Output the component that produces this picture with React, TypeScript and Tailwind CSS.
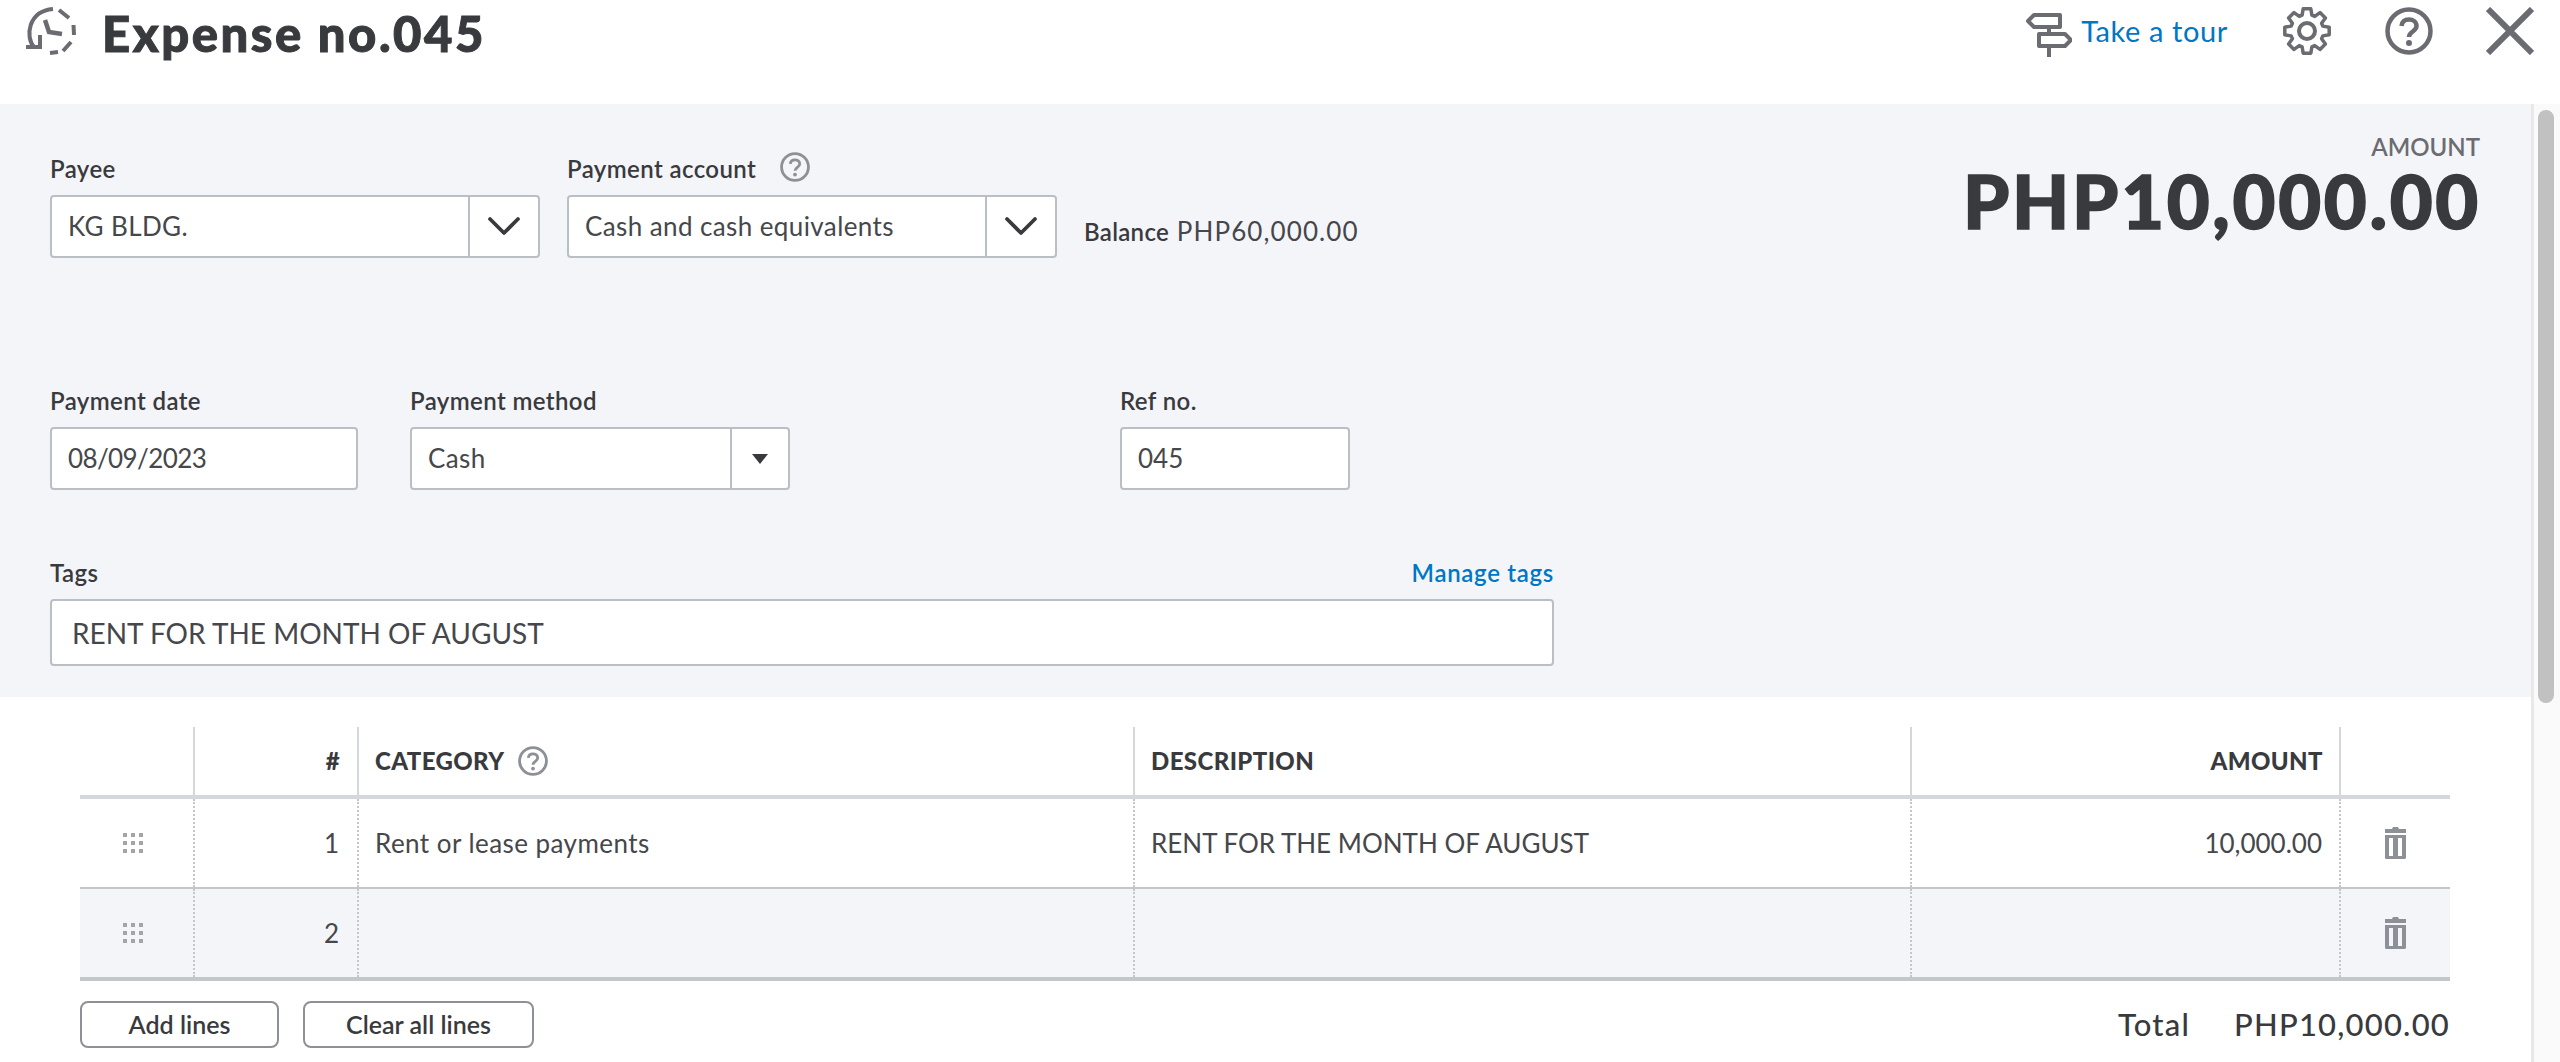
import { ChevronDown } from "lucide-react";

const font = { fontFamily: "Lato, 'Open Sans', sans-serif" };

// 8 blocky teeth, same outline as the toolbar gear
const gearPoints = Array.from({ length: 8 }, (_, i) => {
    const a = (i * Math.PI) / 4 - Math.PI / 2;
    const pt = (r: number, d: number) => `${(24 + r * Math.cos(a + d)).toFixed(1)},${(24 + r * Math.sin(a + d)).toFixed(1)}`;
    return [pt(16.5, -0.3), pt(22.5, -0.17), pt(22.5, 0.17), pt(16.5, 0.3)].join(" ");
}).join(" ");

function HelpIcon({ className }: { className: string }) {
    return (
        <svg viewBox="0 0 48 48" className={className} fill="none" stroke="currentColor">
            <circle cx="24" cy="24" r="21.5" strokeWidth="4.500" />
            <path d="M16.5 19c.5-4.5 3.5-6.5 7.5-6.5s7.500 2.500 7.500 6.500c0 5.500-7.500 5.500-7.500 11" strokeWidth="4.500" />
            <circle cx="24" cy="36" r="3" fill="currentColor" stroke="none" />
        </svg>
    );
}

function Grip() {
    const dots = [0, 1, 2];
    return (
        <svg width="20" height="20" viewBox="0 0 20 20" fill="#a3a5a9">
            {dots.map((r) => dots.map((c) => <rect key={`${r}${c}`} x={c * 8} y={r * 8} width="4" height="4" />))}
        </svg>
    );
}

function Trash() {
    return (
        <svg width="21" height="32" viewBox="0 0 21 32" fill="#8d9096">
            <path d="M8 0h5l1 2h7v4H0V2h7z" />
            <path fillRule="evenodd" d="M0 8h21v22.500a1.500 1.500 0 0 1-1.500 1.500h-18A1.500 1.500 0 0 1 0 30.500zM4 11v18h4V11zM13 11v18h4V11z" />
        </svg>
    );
}

function SelectBox({ value, small, className }: { value: string; small?: boolean; className: string }) {
    return (
        <div className={`flex h-[63px] rounded-[4px] border-2 border-[#babec5] bg-white ${className}`}>
            <div className="flex flex-1 items-center pl-[16px] text-[26px] tracking-[0.4px] text-[#46474b]">{value}</div>
            <div className={`flex items-center justify-center border-l-2 border-[#babec5] ${small ? "w-[58px]" : "w-[70px]"}`}>
                {small ? (
                    <div className="h-0 w-0 border-x-[8px] border-t-[10px] border-x-transparent border-t-[#393a3d]" />
                ) : (
                    <ChevronDown className="mb-[2px] h-[56px] w-[56px] text-[#393a3d]" strokeWidth={1.6} />
                )}
            </div>
        </div>
    );
}

function Label({ children }: { children: React.ReactNode }) {
    return <div className="text-[24px] leading-[30px] font-semibold tracking-[0.4px] text-[#393a3d]">{children}</div>;
}

function TextBox({ value, className }: { value: string; className: string }) {
    return (
        <div className={`flex h-[63px] items-center rounded-[4px] border-2 border-[#babec5] bg-white pl-[16px] text-[26px] text-[#46474b] ${className}`}>
            {value}
        </div>
    );
}

function Row({ n, category, description, amount, shaded }: { n: string; category?: string; description?: string; amount?: string; shaded?: boolean }) {
    const cell = "flex h-full items-center border-l-2 border-dotted border-[#c4c6ca]";
    return (
        <div className={`grid h-[88px] grid-cols-[113px_164px_776px_777px_429px_111px] items-center text-[26px] text-[#46474b] ${shaded ? "bg-[#f4f5f8]" : "bg-white"}`}>
            <div className="flex items-center justify-center pr-[8px]"><Grip /></div>
            <div className={`${cell} justify-end pr-[18px]`}>{n}</div>
            <div className={`${cell} pl-[16px] tracking-[0.45px]`}>{category}</div>
            <div className={`${cell} pl-[16px]`}>{description}</div>
            <div className={`${cell} justify-end pr-[17px]`}>{amount}</div>
            <div className={`${cell} justify-center`}><Trash /></div>
        </div>
    );
}

export default function App() {
    return (
        <div style={font} className="flex h-[1062px] w-[2560px] flex-col overflow-hidden bg-white text-[#393a3d]">
            <header className="flex h-[104px] shrink-0">
                <div className="flex flex-1 items-start">
                    <svg viewBox="0 0 50 48" className="mt-[7px] ml-[26px] h-[48px] w-[50px]" fill="none" stroke="#6b6c72" strokeWidth="4">
                        <path d="M8 40C-1 30 2 4 27 2" />
                        <path d="M33 3l10 8M47.500 18l.5 10M45 35l-8 9M32 45l-8 1" />
                        <path d="M0 40h14V28" />
                        <path d="M19 13l4 12 13 2" strokeWidth="4.500" />
                    </svg>
                    <h1 className="mt-[3px] ml-[26px] text-[49px] leading-[60px] font-black tracking-[2.5px] [-webkit-text-stroke:1px_#393a3d]">Expense no.045</h1>
                </div>
                <div className="flex items-start">
                    <svg viewBox="0 0 46 44" className="mt-[13px] h-[44px] w-[46px]" fill="none" stroke="#6b6c72" strokeWidth="4" strokeLinejoin="round">
                        <path d="M8 2H34V14H8L2 8Z" />
                        <path d="M13 21H39L45 27 39 33H13Z" />
                        <path d="M23 14v7M23 33v11" />
                    </svg>
                    <a className="mt-[11px] ml-[9px] text-[29px] leading-[40px] tracking-[0.6px] text-[#0077c5]">Take a tour</a>
                    <svg viewBox="0 0 48 48" className="mt-[7px] ml-[55px] h-[48px] w-[48px]" fill="none" stroke="#6b6c72" strokeWidth="3.500" strokeLinejoin="round">
                        <circle cx="24" cy="24" r="8" strokeWidth="4" />
                        <polygon points={gearPoints} />
                    </svg>
                    <HelpIcon className="mt-[7px] ml-[54px] h-[48px] w-[48px] text-[#6b6c72]" />
                    <svg viewBox="0 0 48 48" className="mt-[7px] mr-[26px] ml-[53px] h-[48px] w-[48px]" stroke="#6b6c72" strokeWidth="6">
                        <path d="M2 2l44 44M46 2L2 46" />
                    </svg>
                </div>
            </header>

            <div className="flex flex-1">
                <main className="flex-1">
                    <section className="relative h-[593px] bg-[#f4f5f8] px-[50px] pt-[50px]">
                        <div className="absolute top-[29px] right-[50px] text-right">
                            <div className="pr-[1px] text-[24px] leading-[28px] font-semibold text-[#6b6c72]">AMOUNT</div>
                            <div className="text-[74px] leading-[80px] font-black tracking-[2.7px] [-webkit-text-stroke:1.5px_#393a3d]">PHP10,000.00</div>
                        </div>
                        <div className="flex items-end">
                            <div className="w-[490px]">
                                <Label>Payee</Label>
                                <SelectBox value="KG BLDG." className="mt-[11px]" />
                            </div>
                            <div className="ml-[27px] w-[490px]">
                                <div className="flex items-center gap-[24px]"><Label>Payment account</Label><HelpIcon className="h-[30px] w-[30px] -translate-y-[2px] text-[#8d9096]" /></div>
                                <SelectBox value="Cash and cash equivalents" className="mt-[11px]" />
                            </div>
                            <div className="ml-[27px] pb-[7px] text-[26px] tracking-[1.1px] text-[#46474b]"><span className="text-[24px] font-semibold tracking-[0.3px] text-[#393a3d]">Balance</span> PHP60,000.00</div>
                        </div>
                        <div className="mt-[128px] flex">
                            <div className="w-[308px]">
                                <Label>Payment date</Label>
                                <TextBox value="08/09/2023" className="mt-[11px] tracking-[-0.6px]" />
                            </div>
                            <div className="ml-[52px] w-[380px]">
                                <Label>Payment method</Label>
                                <SelectBox small value="Cash" className="mt-[11px]" />
                            </div>
                            <div className="ml-[330px] w-[230px]">
                                <Label>Ref no.</Label>
                                <TextBox value="045" className="mt-[11px]" />
                            </div>
                        </div>
                        <div className="mt-[68px] w-[1504px]">
                            <div className="flex items-end justify-between">
                                <Label>Tags</Label>
                                <a className="text-[24px] leading-[30px] font-semibold tracking-[0.7px] text-[#0077c5]">Manage tags</a>
                            </div>
                            <div className="mt-[11px] flex h-[67px] items-center rounded-[4px] border-2 border-[#babec5] bg-white pl-[20px] text-[28px] text-[#46474b]">RENT FOR THE MONTH OF AUGUST</div>
                        </div>
                    </section>

                    <section className="mx-[80px] mt-[30px] w-[2370px]">
                        <div className="grid h-[68px] grid-cols-[113px_164px_776px_777px_429px_111px] text-[24px] font-black tracking-[0.4px]">
                            <div />
                            <div className="flex items-center justify-end border-l-2 border-[#d4d7dc] pr-[17px]">#</div>
                            <div className="flex items-center gap-[14px] border-l-2 border-[#d4d7dc] pl-[16px]">CATEGORY <HelpIcon className="h-[30px] w-[30px] text-[#8d9096]" /></div>
                            <div className="flex items-center border-l-2 border-[#d4d7dc] pl-[16px]">DESCRIPTION</div>
                            <div className="flex items-center justify-end border-l-2 border-[#d4d7dc] pr-[16px]">AMOUNT</div>
                            <div className="border-l-2 border-[#d4d7dc]" />
                        </div>
                        <div className="h-[4px] bg-[#d4d7dc]" />
                        <Row n="1" category="Rent or lease payments" description="RENT FOR THE MONTH OF AUGUST" amount="10,000.00" />
                        <div className="h-[2px] bg-[#c4c6ca]" />
                        <Row n="2" shaded />
                        <div className="h-[4px] bg-[#c4c6ca]" />
                        <div className="mt-[20px] flex items-center">
                            <button className="h-[47px] w-[199px] rounded-[8px] border-2 border-[#8d9096] text-[25px] font-semibold">Add lines</button>
                            <button className="ml-[24px] h-[47px] w-[231px] rounded-[8px] border-2 border-[#8d9096] text-[25px] font-semibold">Clear all lines</button>
                            <div className="ml-auto flex gap-[44px] text-[31px] font-medium tracking-[1.2px]"><span>Total</span><span>PHP10,000.00</span></div>
                        </div>
                    </section>
                </main>
                <aside className="w-[29px] shrink-0 border-l-[3px] border-[#e8e8e8] bg-[#fafafa] pt-[6px] pl-[4px]">
                    <div className="h-[593px] w-[16px] rounded-full bg-[#c1c1c1]" />
                </aside>
            </div>
        </div>
    );
}
